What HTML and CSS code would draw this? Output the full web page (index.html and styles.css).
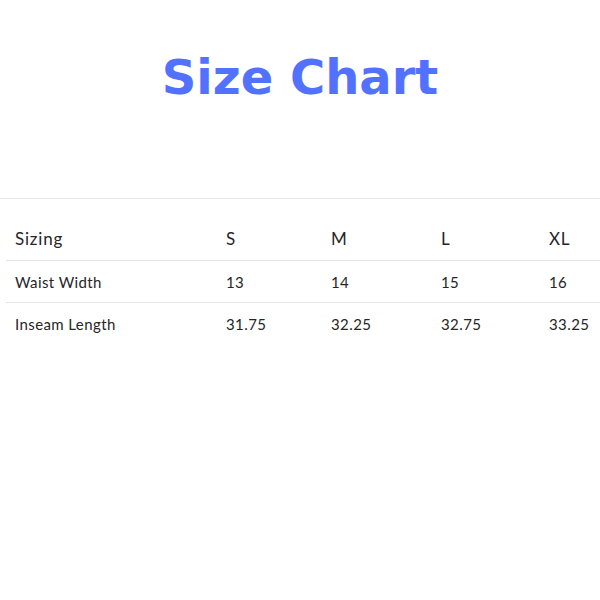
FILE: index.html
```html
<!DOCTYPE html>
<html>
<head>
<meta charset="utf-8">
<link rel="stylesheet" href="styles.css">
</head>
<body>
<div class="page">
  <h1 class="title">Size Chart</h1>
  <div class="chart">
    <div class="row head">
      <div class="cell label">Sizing</div>
      <div class="cell">S</div>
      <div class="cell">M</div>
      <div class="cell">L</div>
      <div class="cell">XL</div>
    </div>
    <div class="row">
      <div class="cell label">Waist Width</div>
      <div class="cell">13</div>
      <div class="cell">14</div>
      <div class="cell">15</div>
      <div class="cell">16</div>
    </div>
    <div class="row last">
      <div class="cell label">Inseam Length</div>
      <div class="cell">31.75</div>
      <div class="cell">32.25</div>
      <div class="cell">32.75</div>
      <div class="cell">33.25</div>
    </div>
  </div>
</div>
</body>
</html>
```
FILE: styles.css
```css
html, body {
  margin: 0;
  padding: 0;
  background: #ffffff;
}
.page {
  width: 600px;
  height: 600px;
  overflow: hidden;
}
.title {
  margin: 0;
  padding-top: 49px;
  height: 198px;
  box-sizing: border-box;
  text-align: center;
  font-family: "DejaVu Sans", sans-serif;
  font-weight: 700;
  font-size: 48px;
  line-height: 56px;
  letter-spacing: 0;
  color: #5271ff;
}
.chart {
  border-top: 1px solid #e6e6e6;
  font-family: Lato, "Open Sans", sans-serif;
  color: #262626;
}
.row {
  display: grid;
  grid-template-columns: 220px 105px 110px 108px 1fr;
  margin-left: 6px;
  border-bottom: 1px solid #e6e6e6;
  height: 41px;
  align-items: center;
  font-size: 15px;
  letter-spacing: 0.4px;
}
.row.head {
  padding-top: 17px;
  height: 44px;
  font-size: 17px;
  letter-spacing: 0.8px;
}
.row.last {
  border-bottom: none;
}
.cell.label {
  padding-left: 9px;
}
```
